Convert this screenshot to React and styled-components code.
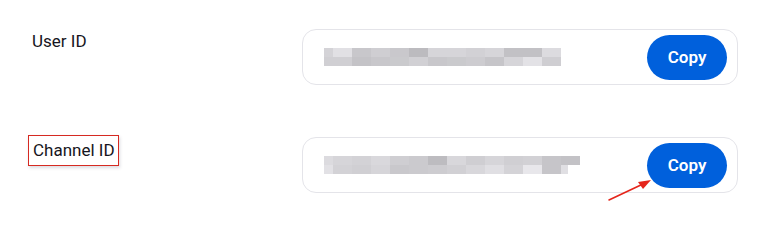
import React from 'react'
import styled, { createGlobalStyle } from 'styled-components'

const Global = createGlobalStyle`
  body {
    margin: 0;
    background: #ffffff;
    font-family: Roboto, "Noto Sans", Arial, sans-serif;
  }
`

const Page = styled.div`
  width: 776px;
  height: 232px;
  box-sizing: border-box;
  padding: 29px 0 0 32px;
  display: grid;
  grid-template-columns: 270px 436px;
  row-gap: 52px;
  align-items: start;
  align-content: start;
`

const LabelCell = styled.div`
  padding-top: 1px;
`

const Label = styled.span`
  display: inline-block;
  font-size: 17px;
  line-height: 22px;
  color: #161521;
  ${p => p.$marked && `
    padding: 3px 3px 4px 4px;
    margin: -3px -3px 0 -4px;
    border: 1px solid #d62a22;
    box-shadow: 1px 2px 3px rgba(60, 60, 90, 0.18);
  `}
`

const Field = styled.div`
  position: relative;
  height: 56px;
  box-sizing: border-box;
  border: 1px solid #e4e4e9;
  border-radius: 14px;
  display: flex;
  align-items: center;
  justify-content: space-between;
  padding: 0 10px 0 21px;
`

const Pixels = styled.div`
  display: flex;
  flex-direction: column;
`

const PixelRow = styled.div`
  display: flex;
  height: 9px;
`

const Block = styled.div`
  height: 9px;
`

const CopyButton = styled.button`
  width: 80px;
  height: 45px;
  border: none;
  border-radius: 23px;
  background: #0060dc;
  color: #ffffff;
  font-family: Roboto, Arial, sans-serif;
  font-size: 17px;
  font-weight: 600;
  cursor: pointer;
  padding: 0;
`

const Arrow = styled.svg`
  position: absolute;
  left: 304px;
  top: 40px;
  overflow: visible;
`

const blur1 = {
  top: [
    [9, '#d4d3d7'], [19, '#e1e0e4'], [19, '#c8c7cb'], [19, '#cfced2'], [19, '#c9c8cc'],
    [19, '#bcbbbf'], [19, '#d6d5d9'], [19, '#d6d5d9'], [19, '#d2d1d5'], [19, '#d6d5d9'],
    [19, '#c2c1c5'], [19, '#c2c1c5'], [19, '#dcdbdf'],
  ],
  bottom: [
    [28, '#d0cfd3'], [19, '#c4c3c7'], [19, '#c8c7cb'], [19, '#cacacd'], [19, '#d1d0d4'],
    [19, '#c8c7cb'], [19, '#cacacd'], [19, '#cdccd0'], [19, '#c6c5c9'], [19, '#d6d5d9'],
    [19, '#e3e2e6'], [19, '#cfced2'],
  ],
}

const blur2 = {
  top: [
    [9, '#dcdbdf'], [19, '#d6d5d9'], [19, '#d3d2d6'], [19, '#d9d8dc'], [19, '#cfced2'],
    [19, '#cbcace'], [19, '#bdbcc0'], [19, '#d8d7db'], [19, '#cfced2'], [19, '#d6d5d9'],
    [19, '#d0cfd3'], [19, '#d2d1d5'], [19, '#c6c5c9'], [19, '#c3c2c6'],
  ],
  bottom: [
    [9, '#e2e1e5'], [19, '#d3d2d6'], [19, '#d0cfd3'], [19, '#d6d5d9'], [19, '#c9c8cc'],
    [19, '#cbcace'], [19, '#cdccd0'], [19, '#d1d0d4'], [19, '#d8d7db'], [19, '#e0dfe3'],
    [19, '#d4d3d7'], [19, '#e8e7eb'], [19, '#c6c5c9'], [7, '#e0dfe3'],
  ],
}

function Blurred({ data }) {
  return (
    <Pixels>
      {['top', 'bottom'].map(r => (
        <PixelRow key={r}>
          {data[r].map(([w, c], i) => (
            <Block key={i} style={{ width: w, background: c }} />
          ))}
        </PixelRow>
      ))}
    </Pixels>
  )
}

const rows = [
  { label: 'User ID', blur: blur1 },
  { label: 'Channel ID', blur: blur2, marked: true },
]

export default function App() {
  return (
    <>
      <Global />
      <Page>
        {rows.map(row => (
          <React.Fragment key={row.label}>
            <LabelCell>
              <Label $marked={row.marked}>{row.label}</Label>
            </LabelCell>
            <Field>
              <Blurred data={row.blur} />
              <CopyButton>Copy</CopyButton>
              {row.marked && (
                <Arrow width="46" height="24" viewBox="0 0 46 24">
                  <line x1="2" y1="22" x2="36" y2="6" stroke="#e5251b" strokeWidth="1.6" strokeLinecap="round" />
                  <polygon points="44,2 31,4 36,11" fill="#e5251b" />
                </Arrow>
              )}
            </Field>
          </React.Fragment>
        ))}
      </Page>
    </>
  )
}
